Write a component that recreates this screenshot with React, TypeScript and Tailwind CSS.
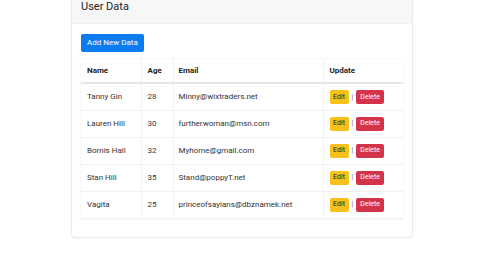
import React from 'react';

const users = [
    { name: 'Tanny Gin', age: 28, email: 'Minny@wixtraders.net' },
    { name: 'Lauren Hill', age: 30, email: 'furtherwoman@msn.com' },
    { name: 'Bornis Hall', age: 32, email: 'Myhome@gmail.com' },
    { name: 'Stan Hill', age: 35, email: 'Stand@poppyT.net' },
    { name: 'Vagita', age: 25, email: 'princeofsayians@dbznamek.net' },
];

export default function App() {
    return (
        <div className="w-[480px] h-[270px] bg-white overflow-hidden" style={{ fontFamily: 'Roboto, "Liberation Sans", sans-serif' }}>
            <div className="ml-[71px] w-[342px] -mt-[10px] border border-[#ececec] rounded-b shadow-[0_1px_2px_rgba(0,0,0,0.05)]">
                {/* Header */}
                <div className="h-[33px] bg-[#f7f7f7] border-b border-[#efefef] px-[9px] pt-[9px] text-[11px] leading-[14px] text-[#222]">
                    User Data
                </div>

                <div className="px-[9px] pt-[10px] pb-[18px]">
                    <button className="block h-[18px] px-[6px] bg-[#0b7bf0] text-white text-[8px] rounded-[2px]">
                        Add New Data
                    </button>

                    <table className="mt-[7px] w-[322px] border-collapse text-[8px] text-[#333] shadow-[0_0_2px_rgba(0,0,0,0.08)]">
                        <thead>
                            <tr className="h-[24px] border-b-2 border-[#e6e6e6] font-bold text-[#222]">
                                <th className="w-[60px] px-[6px] text-left border-r border-[#f0f0f0]">Name</th>
                                <th className="w-[32px] px-[6px] text-left border-r border-[#f0f0f0]">Age</th>
                                <th className="w-[150px] px-[5px] text-left border-r border-[#f0f0f0]">Email</th>
                                <th className="px-[6px] text-left">Update</th>
                            </tr>
                        </thead>
                        <tbody>
                            {users.map((u, i) => (
                                <tr key={i} className="h-[27px] border-b border-[#f0f0f0]">
                                    <td className="px-[6px] border-r border-[#f3f3f3]">{u.name}</td>
                                    <td className="px-[6px] border-r border-[#f3f3f3]">{u.age}</td>
                                    <td className="px-[5px] border-r border-[#f3f3f3]">{u.email}</td>
                                    <td className="px-[6px]">
                                        <div className="flex items-center gap-[3px]">
                                            <span className="h-[14px] w-[19px] flex items-center justify-center bg-[#f7c01a] text-[#222] text-[7px] rounded-[2px]">Edit</span>
                                            <span className="text-[#666] text-[7px]">|</span>
                                            <span className="h-[14px] w-[28px] flex items-center justify-center bg-[#d4344a] text-white text-[7px] rounded-[2px]">Delete</span>
                                        </div>
                                    </td>
                                </tr>
                            ))}
                        </tbody>
                    </table>
                </div>
            </div>
        </div>
    );
}
